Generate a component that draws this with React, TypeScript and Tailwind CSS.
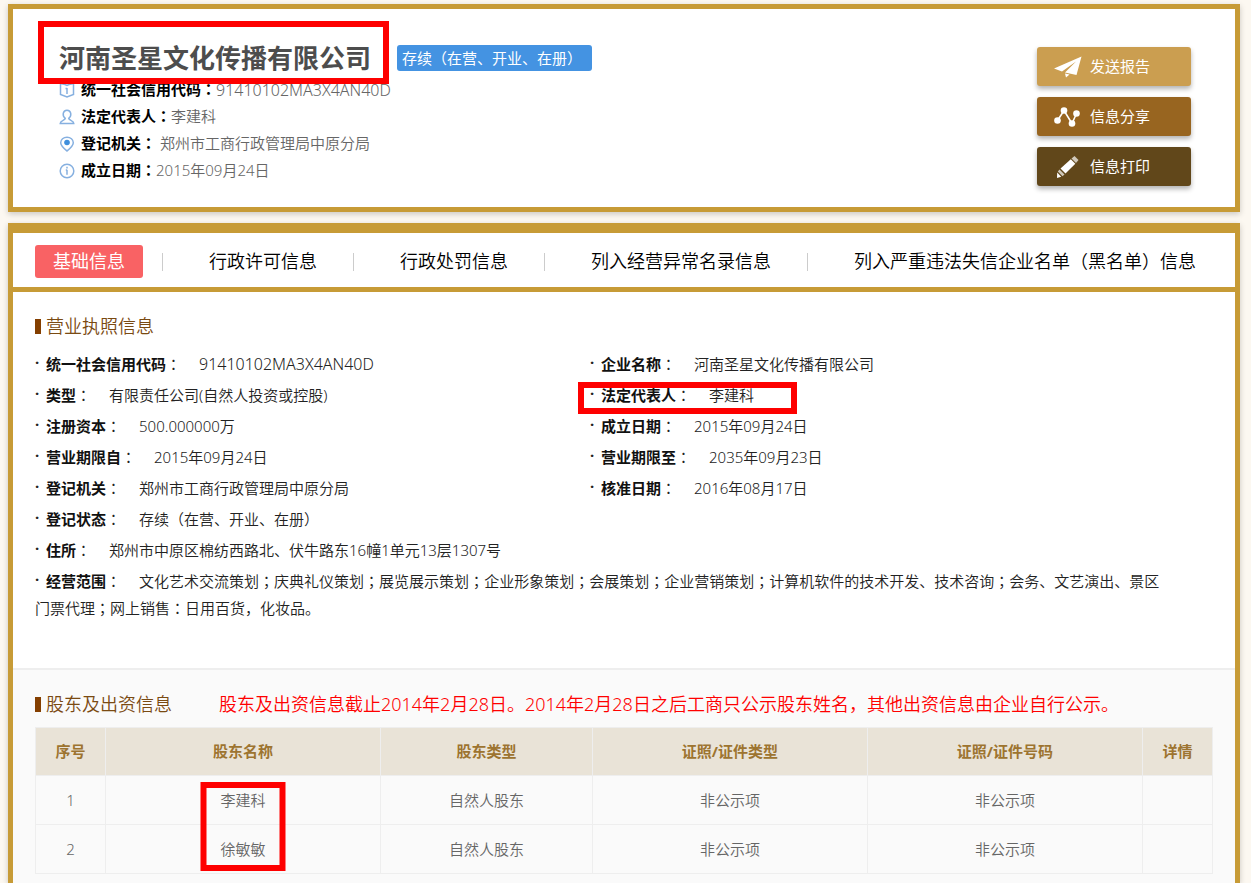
import React from "react";

const FONT = "font-['Noto_Sans','Noto_Sans_CJK_SC',sans-serif]";

const TABS = [
  "行政许可信息",
  "行政处罚信息",
  "列入经营异常名录信息",
  "列入严重违法失信企业名单（黑名单）信息",
];

const CREDIT_CODE = <span className="text-base leading-none">91410102MA3X4AN40D</span>;

const LEFT_FIELDS = [
  { label: "统一社会信用代码", value: CREDIT_CODE },
  { label: "类型", value: "有限责任公司(自然人投资或控股)" },
  { label: "注册资本", value: "500.000000万" },
  { label: "营业期限自", value: "2015年09月24日" },
  { label: "登记机关", value: "郑州市工商行政管理局中原分局" },
  { label: "登记状态", value: "存续（在营、开业、在册）" },
  { label: "住所", value: "郑州市中原区棉纺西路北、伏牛路东16幢1单元13层1307号" },
];

const RIGHT_FIELDS = [
  { label: "企业名称", value: "河南圣星文化传播有限公司" },
  { label: "法定代表人", value: "李建科", marked: true },
  { label: "成立日期", value: "2015年09月24日" },
  { label: "营业期限至", value: "2035年09月23日" },
  { label: "核准日期", value: "2016年08月17日" },
];

const SCOPE =
  "文化艺术交流策划；庆典礼仪策划；展览展示策划；企业形象策划；会展策划；企业营销策划；计算机软件的技术开发、技术咨询；会务、文艺演出、景区门票代理；网上销售：日用百货，化妆品。";

const SHAREHOLDERS = [
  { name: "李建科", type: "自然人股东", cert: "非公示项", number: "非公示项" },
  { name: "徐敏敏", type: "自然人股东", cert: "非公示项", number: "非公示项" },
];

const iconProps = {
  width: 16,
  height: 16,
  viewBox: "0 0 16 16",
  fill: "none",
  stroke: "#86b0e0",
  strokeWidth: 1.5,
  className: "shrink-0",
};

const CodeIcon = () => (
  <svg {...iconProps}>
    <path d="M1.5 1.5 6 2.5 8 3.5 10 2.5 14.5 1.5V12.5L8 15 1.5 12.5Z" />
    <path d="M8 6v6M6.5 6.5H8" />
  </svg>
);

const PersonIcon = () => (
  <svg {...iconProps}>
    <path d="M6.3 9.3C3 7 3.6 1.2 8 1.2S13 7 9.7 9.3C9.7 11.5 14.8 11.3 14.8 14.5H1.2C1.2 11.3 6.3 11.5 6.3 9.3Z" />
  </svg>
);

const PinIcon = () => (
  <svg {...iconProps}>
    <path d="M8 15C5 12.5 1.7 9.8 1.7 6.7 1.7 3.5 4.5 1.2 8 1.2s6.3 2.3 6.3 5.5C14.3 9.8 11 12.5 8 15Z" />
    <circle cx="8" cy="6.5" r="2.8" fill="#3f8fdd" stroke="none" />
  </svg>
);

const InfoIcon = () => (
  <svg {...iconProps}>
    <circle cx="8" cy="8" r="6.8" />
    <path d="M8 6.8v5M6.8 7H8M8 3.8v1.6" />
  </svg>
);

const SUMMARY = [
  { icon: <CodeIcon />, label: "统一社会信用代码", value: CREDIT_CODE },
  { icon: <PersonIcon />, label: "法定代表人", value: "李建科" },
  { icon: <PinIcon />, label: "登记机关", value: "\u00a0郑州市工商行政管理局中原分局" },
  { icon: <InfoIcon />, label: "成立日期", value: "2015年09月24日" },
];

const SendIcon = () => (
  <svg width="28" height="24" viewBox="0 0 28 24" fill="#fff" className="shrink-0">
    <path d="M27.5 1.5 0 13.5 8 16.5 22 6.5 11 17.5 22.5 20Z" />
    <path d="M11 18.6 15.5 19.6 12 22.5Z" />
  </svg>
);

const ShareIcon = () => (
  <svg width="28" height="24" viewBox="0 0 28 24" fill="#fff" className="shrink-0">
    <path d="M3.5 15.5 10 5.5 18 18.5 22.5 8.5" fill="none" stroke="#fff" strokeWidth="1.6" />
    <circle cx="3.5" cy="15.5" r="3.3" />
    <circle cx="10" cy="5.5" r="3.3" />
    <circle cx="18" cy="18.5" r="3.3" />
    <circle cx="22.5" cy="8.5" r="3.3" />
  </svg>
);

const PencilIcon = () => (
  <svg width="28" height="24" viewBox="0 0 28 24" fill="#fff" className="shrink-0">
    <path d="M17.5 3.5 20.5 1 24.5 5 22 8Z" opacity="0.7" />
    <path d="M16.8 4.2 21.3 8.7 11.5 18.5 6.5 13.5Z" />
    <path d="M5.5 14.5 10.5 19.5 8.5 21.3 3.8 16.5Z" opacity="0.7" />
    <path d="M3.2 17.5 7.2 21.8 3 23Z" />
  </svg>
);

const ActionButton = ({
  icon,
  color,
  children,
}: {
  icon: React.ReactNode;
  color: string;
  children: React.ReactNode;
}) => (
  <button
    type="button"
    className={`flex h-[39px] w-[154px] items-center gap-2 rounded-[3px] pl-[17px] text-[15px] font-normal text-white shadow-[0_3px_5px_rgba(0,0,0,0.3)] ${color}`}
  >
    {icon}
    {children}
  </button>
);

// Colons and semicolons sit in the middle of their cell
const Centered = ({ children }: { children: React.ReactNode }) => (
  <span className="font-['Noto_Sans_CJK_TC',sans-serif] leading-none">{children}</span>
);

const FieldLabel = ({ children }: { children: React.ReactNode }) => (
  <>
    <span className="inline-block w-[11px] align-top font-bold leading-[22px]">·</span>
    <strong className="font-bold text-[#111]">{children}</strong>
    <span className="mr-[18px]">
      <Centered>：</Centered>
    </span>
  </>
);

const Field = ({
  label,
  value,
  marked,
}: {
  label: string;
  value: React.ReactNode;
  marked?: boolean;
}) => (
  <li className="relative">
    <FieldLabel>{label}</FieldLabel>
    {value}
    {marked && (
      <span className="absolute -left-3 top-0 h-8 w-[219px] border-6 border-[#fe0000]" />
    )}
  </li>
);

const SectionTitle = ({ children }: { children: React.ReactNode }) => (
  <h2 className="flex items-center gap-[5px] text-lg leading-7 text-[#7a4a12]">
    <span className="h-[15px] w-1.5 bg-[#843f00]" />
    {children}
  </h2>
);

const App = () => {
  return (
    <div className={`bg-[#fcf8f1] pl-2 pr-[11px] pt-1 font-[350] text-[#222] ${FONT}`}>
      {/* Company header */}
      <header className="flex h-[208px] justify-between border-5 border-[#c79b36] bg-white pl-[46px] pr-11 shadow-[0_2px_6px_rgba(0,0,0,0.2)]">
        <div className="pt-8">
          <div className="flex items-center gap-[26px]">
            <h1 className="relative text-[26px] font-bold leading-[34px] text-[#4d4d4d]">
              河南圣星文化传播有限公司
              <span className="absolute -left-[21px] -top-5 z-10 h-[63px] w-[351px] border-6 border-[#fe0000]" />
            </h1>
            <span className="rounded-[3px] bg-[#4493e2] pl-[5px] pr-[10px] text-[15px] font-normal leading-[26px] text-white">
              存续（在营、开业、在册）
            </span>
          </div>
          <ul className="mt-px text-[15px] leading-[27px] text-[#666]">
            {SUMMARY.map((item) => (
              <li key={item.label} className="flex items-center">
                {item.icon}
                <strong className="ml-1.5 font-bold text-black">
                  {item.label}
                  <Centered>：</Centered>
                </strong>
                {item.value}
              </li>
            ))}
          </ul>
        </div>
        <div className="flex flex-col gap-[11px] pt-[38px]">
          <ActionButton icon={<SendIcon />} color="bg-[#cb9e50]">
            发送报告
          </ActionButton>
          <ActionButton icon={<ShareIcon />} color="bg-[#986520]">
            信息分享
          </ActionButton>
          <ActionButton icon={<PencilIcon />} color="bg-[#61471a]">
            信息打印
          </ActionButton>
        </div>
      </header>

      <main className="mt-[11px] border-x-5 border-t-10 border-[#c79b36] bg-white shadow-[0_2px_6px_rgba(0,0,0,0.2)]">
        <nav className="flex h-[59px] items-center whitespace-nowrap border-b-5 border-[#c79b36] pl-[22px] pt-[3px] text-lg leading-[33px] text-black">
          <a href="#basic" className="mr-[19px] rounded-[3px] bg-[#f96264] px-[18px] font-normal text-white">
            基础信息
          </a>
          {TABS.map((tab) => (
            <React.Fragment key={tab}>
              <span className="h-[18px] w-px bg-[#ccc]" />
              <a href="#tab" className="pl-[46px] pr-9">
                {tab}
              </a>
            </React.Fragment>
          ))}
        </nav>

        {/* Business licence */}
        <section className="h-[376px] px-[22px] pt-5">
          <SectionTitle>营业执照信息</SectionTitle>
          <div className="mt-[11px] grid grid-cols-[555px_1fr] text-[15px] leading-[27px]">
            <ul className="space-y-1">
              {LEFT_FIELDS.map((field) => (
                <Field key={field.label} {...field} />
              ))}
            </ul>
            <ul className="space-y-1">
              {RIGHT_FIELDS.map((field) => (
                <Field key={field.label} {...field} />
              ))}
            </ul>
            <p className="col-span-2 mt-1 pr-[50px]">
              <FieldLabel>经营范围</FieldLabel>
              {SCOPE.split(/([；：])/).map((part, idx) =>
                idx % 2 ? <Centered key={idx}>{part}</Centered> : part
              )}
            </p>
          </div>
        </section>

        {/* Shareholders */}
        <section className="border-t-2 border-[#eee] bg-[#fafafa] px-[22px] pb-[9px] pt-5">
          <div className="flex items-center gap-[47px]">
            <SectionTitle>股东及出资信息</SectionTitle>
            <p className="text-lg leading-7 text-[#f00]">
              股东及出资信息截止2014年2月28日。2014年2月28日之后工商只公示股东姓名，其他出资信息由企业自行公示。
            </p>
          </div>
          <table className="mt-[9px] w-full table-fixed border-collapse text-center text-[15px] text-[#666]">
            <thead>
              <tr className="h-12 bg-[#e9e3d7] text-[#9d7430]">
                <th className="w-[70px] border border-[#eee]">序号</th>
                <th className="border border-[#eee]">股东名称</th>
                <th className="w-[18%] border border-[#eee]">股东类型</th>
                <th className="border border-[#eee]">证照/证件类型</th>
                <th className="border border-[#eee]">证照/证件号码</th>
                <th className="w-[70px] border border-[#eee]">详情</th>
              </tr>
            </thead>
            <tbody>
              {SHAREHOLDERS.map((holder, idx) => (
                <tr key={holder.name} className="h-[49px]">
                  <td className="border border-[#eee]">{idx + 1}</td>
                  <td className="relative border border-[#eee]">
                    {holder.name}
                    {idx === 0 && (
                      <span className="absolute left-1/2 top-1.5 z-10 h-[89px] w-[85px] -translate-x-1/2 border-6 border-[#fe0000]" />
                    )}
                  </td>
                  <td className="border border-[#eee]">{holder.type}</td>
                  <td className="border border-[#eee]">{holder.cert}</td>
                  <td className="border border-[#eee]">{holder.number}</td>
                  <td className="border border-[#eee]" />
                </tr>
              ))}
            </tbody>
          </table>
        </section>
      </main>
    </div>
  );
};

export default App;
